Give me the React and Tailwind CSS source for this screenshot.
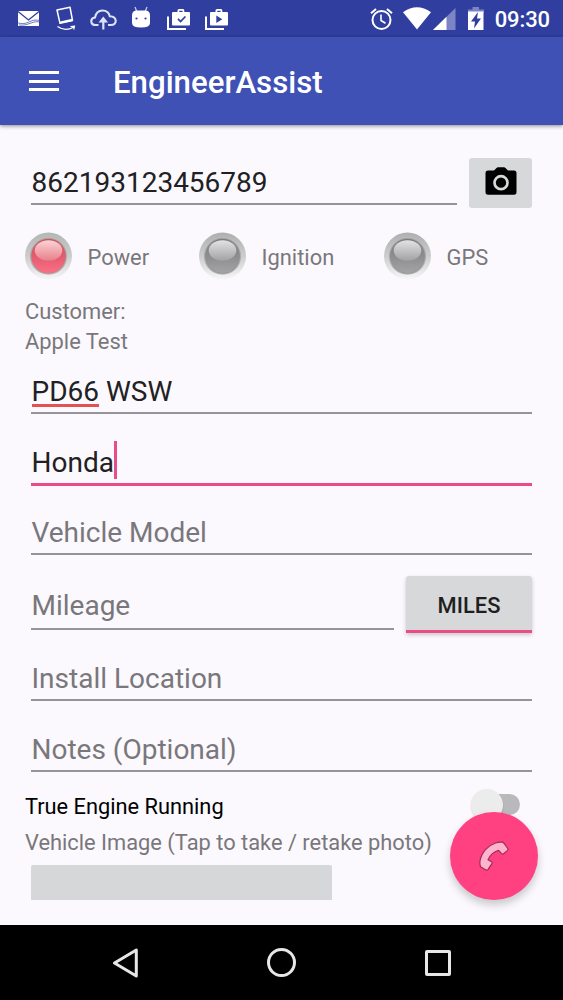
import React, { useState } from 'react'

const leds = [
  { id: 'power', label: 'Power', on: true, width: 'w-[174px]' },
  { id: 'ignition', label: 'Ignition', on: false, width: 'w-[185px]' },
  { id: 'gps', label: 'GPS', on: false, width: 'w-[110px]' },
]

function StatusBar() {
  return (
    <div className="h-[37px] shrink-0 bg-[#303f9f] flex items-start text-white">
      <svg className="ml-[17px] mt-[11px] shrink-0" width="23" height="16" viewBox="0 0 23 16">
        <path d="M1 0h21v15H1z" fill="#fff" />
        <path d="M1 .5l10.500 8.500L22 .5" fill="none" stroke="#303f9f" strokeWidth="1.3" />
        <path d="M0 11.500c5 2 9 1 13-1s6-1.500 10-1M2 14c5 .5 8-.5 12-2s6-1.500 9-1" fill="none" stroke="#303f9f" strokeWidth=".7" />
      </svg>
      <svg className="ml-[16px] mt-[6px] shrink-0" width="20" height="25" viewBox="0 0 20 25" fill="none" stroke="#fff">
        <path d="M1 4L14 1.200l2.500 13.300L4 17.300z" strokeWidth="1.5" strokeLinejoin="round" />
        <path d="M4.300 16.500l12.200-2.600" strokeWidth="2.200" />
        <path d="M1.500 20.500c5 3.500 11 3.500 16 .7M14.500 20.500l4-.3-.8 3.300" strokeWidth="1.2" />
      </svg>
      <svg className="ml-[14px] mt-[9px] shrink-0" width="27" height="21" viewBox="0 0 27 21" fill="none" stroke="#dfe2f4" strokeWidth="2.100">
        <path d="M8.500 16H5.500C.3 16-.3 9.300 5 8.500 6 3.500 8.500 1.500 12.500 1.500c4 0 6.500 2.300 7.300 5.700C27.500 7.500 27.500 16 21 16h-3" />
        <path d="M13.300 20.500V10" strokeWidth="2.200" />
        <path d="M8.500 13.500L13.300 7.500l4.800 6z" fill="#dfe2f4" stroke="none" />
      </svg>
      <svg className="ml-[14px] mt-[6px] shrink-0" width="20" height="22" viewBox="0 0 20 22">
        <path d="M4 1l2 5M16 1l-2 5" stroke="#c6cbe8" strokeWidth="1.300" />
        <path d="M1 9.500Q1 5 5 4.500h10q4 .5 4 5V17q0 4.500-9 4.500T1 17z" fill="#fff" />
        <circle cx="5.500" cy="12.500" r="1.100" fill="#303f9f" />
        <circle cx="14.500" cy="12.500" r="1.100" fill="#303f9f" />
      </svg>
      <BagIcon className="ml-[16px]">
        <path d="M11 9.800l2.600 2.700 4.800-5" fill="none" stroke="#303f9f" strokeWidth="1.800" />
      </BagIcon>
      <BagIcon className="ml-[14px]">
        <path d="M11.300 6.500v7.500l6-3.800z" fill="#303f9f" />
      </BagIcon>
      <svg className="ml-auto mt-[7px] shrink-0" width="23" height="24" viewBox="0 0 23 24" fill="none" stroke="#fff" strokeWidth="2">
        <circle cx="11.500" cy="13" r="9" />
        <path d="M11 7.500V13.500l4.500 2.800" strokeWidth="1.600" />
        <path d="M1 6.300l5-4.300M22 6.300L17 2" />
      </svg>
      <svg className="ml-[10px] mt-[7px] shrink-0" width="28" height="23" viewBox="0 0 28 23">
        <path d="M0 5.200Q14-4.800 28 5.200L14 22.500z" fill="#fff" />
      </svg>
      <svg className="ml-[2px] mt-[8px] shrink-0" width="23" height="22" viewBox="0 0 23 22">
        <path d="M0 22L22.500 0v22z" fill="#7b84c5" />
        <path d="M0 22L13.500 8.800V22z" fill="#fff" />
      </svg>
      <svg className="ml-[12px] mt-[7px] shrink-0" width="16" height="24" viewBox="0 0 16 24">
        <path d="M0 6V2.500h4.500V0h6.500v2.500H16V6z" fill="#7b84c5" />
        <path d="M0 4.500h15.500v18.500H0z" fill="#fff" />
        <path d="M10 5L3 14.500h4L6 21.500l7-10H9z" fill="#303f9f" />
      </svg>
      <span className="ml-[11px] mr-[13px] mt-[6px] text-[22px] leading-[28px] font-medium tracking-[-0.1px]">09:30</span>
    </div>
  )
}

function BagIcon({ className, children }) {
  return (
    <svg className={`${className} mt-[9px] shrink-0`} width="24" height="21" viewBox="0 0 24 21">
      <path d="M1 7.500V20h18" fill="none" stroke="#fff" strokeWidth="2" />
      <path d="M5 4q0-1 1-1h4.500V1.500Q10.500 0 12 0h4q1.300 0 1.300 1.500V3H22q1 0 1 1v11.500q0 1-1 1H6q-1 0-1-1zM12.300 3h3.300V1.700h-3.300z" fill="#fff" fillRule="evenodd" />
      {children}
    </svg>
  )
}

function Led({ id, on }) {
  return (
    <svg className="shrink-0" width="48" height="48" viewBox="0 0 48 48">
      <defs>
        <linearGradient id={`${id}-rim`} x1="0" y1="0" x2="0" y2="1">
          <stop offset="0" stopColor={on ? '#b3b7b5' : '#afafb1'} />
          <stop offset=".5" stopColor="#cbcccc" />
          <stop offset="1" stopColor="#f7f6f9" />
        </linearGradient>
        <radialGradient id={`${id}-edge`}>
          <stop offset=".86" stopColor={on ? '#a8787b' : '#808082'} />
          <stop offset="1" stopColor="#bebfbf" />
        </radialGradient>
        <linearGradient id={`${id}-ball`} x1="0" y1="0" x2="0" y2="1">
          <stop offset="0" stopColor={on ? '#c4525d' : '#7b7b7e'} />
          <stop offset=".55" stopColor={on ? '#e65c70' : '#8f8f91'} />
          <stop offset="1" stopColor={on ? '#fb7084' : '#a4a4a6'} />
        </linearGradient>
        <linearGradient id={`${id}-shine`} x1="0" y1="0" x2="0" y2="1">
          <stop offset="0" stopColor={on ? '#fbd3d5' : '#e2e2e4'} />
          <stop offset="1" stopColor={on ? '#e8808a' : '#a2a2a4'} />
        </linearGradient>
      </defs>
      <circle cx="23.500" cy="24" r="23.500" fill={`url(#${id}-rim)`} />
      <circle cx="23.500" cy="24" r="18.800" fill={`url(#${id}-edge)`} />
      <circle cx="23.500" cy="24" r="17" fill={`url(#${id}-ball)`} />
      <ellipse cx="23.500" cy="18.500" rx="13.800" ry="10.300" fill={`url(#${id}-shine)`} />
    </svg>
  )
}

function Field({ className, value, placeholder, focused, children }) {
  return (
    <div className={`${className} flex flex-col justify-end text-[28px] leading-[33px] ${focused ? 'border-b-[3px] border-[#ec4c86]' : 'border-b-2 border-[#979499]'}`}>
      <div className="flex whitespace-pre pb-[4px] pl-[0.500px]">
        {children || (value ? <span className="text-[#212023]">{value}</span> : <span className="text-[#79777b]">{placeholder}</span>)}
      </div>
    </div>
  )
}

export default function App() {
  const [unit, setUnit] = useState('MILES')

  return (
    <div className="w-[563px] h-[1000px] flex flex-col overflow-hidden bg-[#fbf9fd] font-[Roboto,sans-serif]">
      <StatusBar />
      <header className="relative h-[88px] shrink-0 flex items-center bg-[#3f51b5] text-white shadow-[0_1px_4px_rgba(0,0,0,0.45)]">
        <div className="ml-[29px] w-[30px] flex flex-col gap-[5.500px]">
          <span className="h-[3px] bg-white" />
          <span className="h-[3px] bg-white" />
          <span className="h-[3px] bg-white" />
        </div>
        <h1 className="ml-[54px] mt-[4px] text-[31.200px] leading-[40px] font-medium">EngineerAssist</h1>
      </header>

      <main className="flex-1 flex flex-col px-[25px]">
        <div className="mt-[33px] h-[50px] flex ml-[6px]">
          <Field className="w-[426px] h-[47px]" value="862193123456789" />
          <button className="ml-[12px] w-[63px] h-[50px] rounded-[3px] bg-[#d6d8d9] flex items-center justify-center">
            <svg width="32" height="29" viewBox="0 0 32 29" className="mb-[3px]">
              <path d="M3 3.500h6L11.500 1q.7-.7 1.500-.7h6q.8 0 1.500.7L23 3.500h6q2.500 0 2.500 2.500v19q0 2.700-2.500 2.700H3Q.5 27.700.5 25V6Q.5 3.500 3 3.500z" fill="#000" />
              <circle cx="16" cy="15.700" r="6.500" fill="none" stroke="#d6d8d9" strokeWidth="2.700" />
            </svg>
          </button>
        </div>

        <div className="mt-[24px] h-[48px] flex">
          {leds.map((led) => (
            <div key={led.id} className={`${led.width} shrink-0 flex items-center`}>
              <Led id={led.id} on={led.on} />
              <span className="ml-[14.500px] mt-[3px] text-[21.900px] leading-[26px] text-[#79777b]">{led.label}</span>
            </div>
          ))}
        </div>

        <div className="mt-[17px] text-[21.900px] leading-[30px] text-[#79777b]">
          <p>Customer:</p>
          <p>Apple Test</p>
        </div>

        <Field className="ml-[6px] w-[501px] h-[57px]">
          <span className="text-[#212023]">
            <span className="relative">
              PD66
              <span className="absolute left-0 right-0 bottom-[1px] h-[3px] bg-[#e15252]" />
            </span>
            {' WSW'}
          </span>
        </Field>
        <Field className="ml-[6px] w-[501px] h-[72px]" focused>
          <span className="relative text-[#212023]">
            Honda
            <span className="absolute right-[-3px] bottom-0 w-[3px] h-[38px] bg-[#ec4c86]" />
          </span>
        </Field>
        <Field className="ml-[6px] w-[501px] h-[69px]" placeholder="Vehicle Model" />

        <div className="ml-[6px] mt-[21px] h-[58px] flex">
          <Field className="w-[363px] h-[54px] pb-[2px]" placeholder="Mileage" />
          <button
            className="ml-[12px] w-[126px] h-[57px] rounded-t-[3px] border-b-[3px] border-[#ec4c86] bg-[#d6d8d9] pt-[6px] text-[21.900px] font-medium text-[#1f1f21] shadow-[0_2px_4px_rgba(0,0,0,0.2)]"
            onClick={() => setUnit(unit === 'MILES' ? 'KM' : 'MILES')}
          >
            {unit}
          </button>
        </div>

        <Field className="ml-[6px] w-[501px] h-[67px]" placeholder="Install Location" />
        <Field className="ml-[6px] w-[501px] h-[71px]" placeholder="Notes (Optional)" />

        <div className="mt-[17px] h-[34px] flex justify-between">
          <span className="mt-[4px] text-[21.800px] leading-[28px] text-black">True Engine Running</span>
          <div className="relative mt-[5px] mr-[18px] w-[47px] h-[21px] rounded-full bg-[#b9b8ba]">
            <span className="absolute left-[-2px] top-[-5px] w-[32px] h-[32px] rounded-full bg-[#ececec] shadow-[0_1px_2px_rgba(0,0,0,0.15)]" />
          </div>
        </div>
        <p className="mt-[6px] text-[21.850px] leading-[28px] text-[#79777b]">Vehicle Image (Tap to take / retake photo)</p>
        <div className="ml-[6px] mt-[8px] w-[301px] h-[35px] rounded-t-[2px] bg-[#d6d7d8]" />
      </main>

      <button className="absolute left-[450px] top-[812px] w-[88px] h-[88px] rounded-full bg-[#ff4081] flex items-center justify-center shadow-[0_5px_9px_rgba(0,0,0,0.2)]">
        <svg width="30" height="31" viewBox="0 0 30 31">
          <path d="M1 20C2.500 11 9 4.500 16.500 2q3.500-1.200 6.800-.8 1.200.3 2 1.500l3.500 4.800q.7 1-.2 1.900l-4 3.300q-1 .8-2-.1l-3-3.300C15 10.500 10.500 14.500 9 18.800l3.500 2q1 .7.400 1.800l-4 6q-.8 1-2 .4l-5-3q-1.400-1.500-.9-6z" fill="#ffb3cd" stroke="#a02c5b" strokeWidth="1.200" strokeLinejoin="round" />
        </svg>
      </button>

      <nav className="h-[75px] shrink-0 bg-black flex items-center">
        <svg className="ml-[112px]" width="27" height="30" viewBox="0 0 27 30" fill="none" stroke="#e8e6e9" strokeWidth="3" strokeLinejoin="round">
          <path d="M2.500 15L24.300 2v26z" />
        </svg>
        <span className="ml-[128px] w-[29px] h-[29px] rounded-full border-[3px] border-[#e8e6e9]" />
        <span className="ml-[129px] w-[26px] h-[26px] rounded-[2px] border-[3px] border-[#e8e6e9]" />
      </nav>
    </div>
  )
}
